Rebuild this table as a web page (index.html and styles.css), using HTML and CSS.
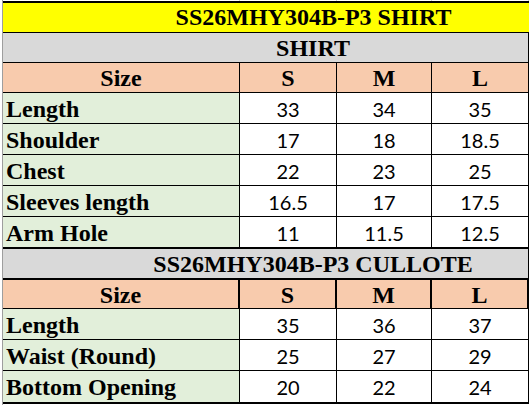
FILE: index.html
```html
<!DOCTYPE html>
<html>
<head>
<meta charset="utf-8">
<link rel="stylesheet" href="styles.css">
</head>
<body>
<div class="page">
  <div class="strip"><span></span><span></span><span></span><span></span></div>
  <div class="sheet">
    <div class="title">SS26MHY304B-P3 SHIRT</div>
    <div class="band">SHIRT</div>
    <div class="row head">
      <div class="cell label c">Size</div><div class="cell c">S</div><div class="cell c">M</div><div class="cell c">L</div>
    </div>
    <div class="row"><div class="cell label">Length</div><div class="cell num">33</div><div class="cell num">34</div><div class="cell num">35</div></div>
    <div class="row"><div class="cell label">Shoulder</div><div class="cell num">17</div><div class="cell num">18</div><div class="cell num">18.5</div></div>
    <div class="row"><div class="cell label">Chest</div><div class="cell num">22</div><div class="cell num">23</div><div class="cell num">25</div></div>
    <div class="row"><div class="cell label">Sleeves length</div><div class="cell num">16.5</div><div class="cell num">17</div><div class="cell num">17.5</div></div>
    <div class="row end"><div class="cell label">Arm Hole</div><div class="cell num">11</div><div class="cell num">11.5</div><div class="cell num">12.5</div></div>
    <div class="band band2">SS26MHY304B-P3 CULLOTE</div>
    <div class="row head head2">
      <div class="cell label c">Size</div><div class="cell c">S</div><div class="cell c">M</div><div class="cell c">L</div>
    </div>
    <div class="row"><div class="cell label">Length</div><div class="cell num">35</div><div class="cell num">36</div><div class="cell num">37</div></div>
    <div class="row"><div class="cell label">Waist (Round)</div><div class="cell num">25</div><div class="cell num">27</div><div class="cell num">29</div></div>
    <div class="row last"><div class="cell label">Bottom Opening</div><div class="cell num">20</div><div class="cell num">22</div><div class="cell num">24</div></div>
  </div>
</div>
</body>
</html>
```
FILE: styles.css
```css
html, body {
  margin: 0;
  padding: 0;
  background: #ffffff;
}
.page {
  margin-left: 2px;
  border-left: 1px solid #9e9e9e;
  height: 405px;
  width: 529px;
  box-sizing: border-box;
}
.strip {
  height: 1px;
  display: grid;
  grid-template-columns: 237px 97px 95px 97px;
}
.strip span {
  border-right: 1px solid #d4d4d4;
}
.sheet {
  width: 526px;
  font-family: "Liberation Serif", "Times New Roman", serif;
  font-weight: 700;
  font-size: 24px;
  color: #000;
}
.title {
  background: #ffff00;
  border-top: 2px solid #000;
  border-bottom: 1px solid #000;
  height: 29px;
  line-height: 29px;
  text-align: center;
  padding-left: 95px;
}
.band {
  background: #d9d9d9;
  border-bottom: 1px solid #000;
  border-right: 1px solid #000;
  height: 28px;
  padding-top: 1px;
  line-height: 28px;
  text-align: center;
  padding-left: 95px;
  box-sizing: content-box;
  width: 430px;
}
.band2 {
  border-bottom: 2px solid #000;
}
.row {
  display: grid;
  grid-template-columns: 237px 97px 95px 97px;
  height: 30px;
  border-bottom: 1px solid #000;
  box-sizing: content-box;
}
.row.head {
  height: 29px;
}
.row.head2 {
  height: 28px;
}
.row.end {
  border-bottom: 2px solid #000;
}
.row.last {
  height: 31px;
  border-bottom: 2px solid #000;
}
.cell {
  border-right: 1px solid #000;
  padding-top: 2px;
  line-height: 28px;
  white-space: nowrap;
  overflow: hidden;
  background: #ffffff;
}
.head .cell {
  background: #f8cbad;
  line-height: 27px;
  padding-top: 2px;
}
.head2 .cell {
  line-height: 26px;
  border-right-width: 2px;
}
.label {
  background: #e2efda;
  padding-left: 3px;
}
.c {
  text-align: center;
  padding-left: 0;
}
.num {
  font-family: Lato, "Liberation Sans", sans-serif;
  font-weight: 400;
  font-size: 20px;
  text-align: center;
  padding-top: 2px;
  line-height: 28px;
}
.last .cell {
  line-height: 29px;
}
.last .num {
  line-height: 29px;
}
```
